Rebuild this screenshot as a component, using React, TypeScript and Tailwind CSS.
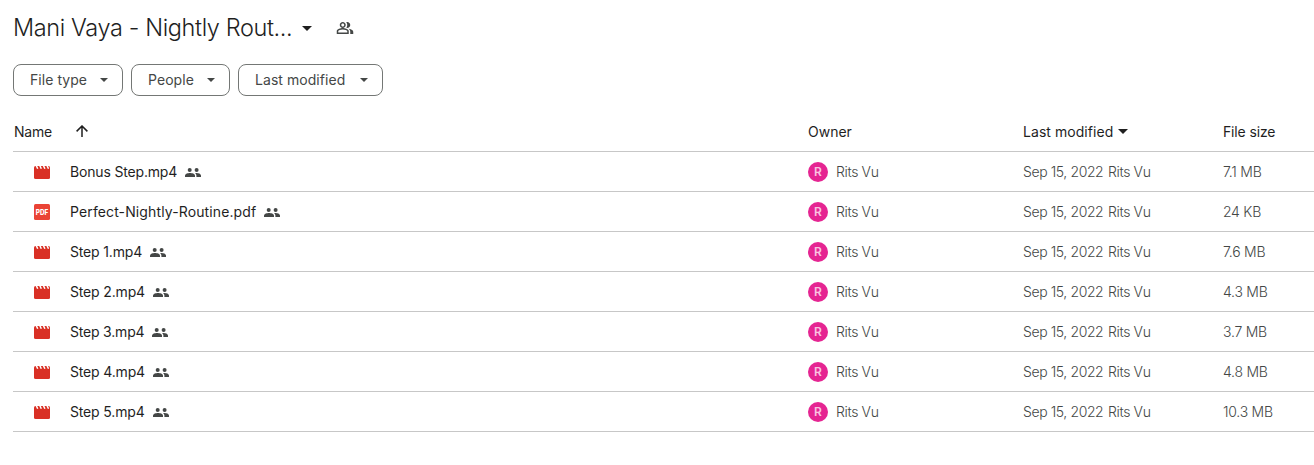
const FONT = 'font-[Inter,Roboto,sans-serif]';

interface DriveFile {
  name: string;
  kind: 'video' | 'pdf';
  size: string;
  nameClass: string;
}

const FILES: DriveFile[] = [
  { name: 'Bonus Step.mp4', kind: 'video', size: '7.1 MB', nameClass: 'w-[107px] tracking-[-0.17px]' },
  { name: 'Perfect-Nightly-Routine.pdf', kind: 'pdf', size: '24 KB', nameClass: 'w-[186px] tracking-[0.12px]' },
  { name: 'Step 1.mp4', kind: 'video', size: '7.6 MB', nameClass: 'w-[72px] tracking-[-0.16px]' },
  { name: 'Step 2.mp4', kind: 'video', size: '4.3 MB', nameClass: 'w-[75px] tracking-[-0.16px]' },
  { name: 'Step 3.mp4', kind: 'video', size: '3.7 MB', nameClass: 'w-[74px] tracking-[-0.2px]' },
  { name: 'Step 4.mp4', kind: 'video', size: '4.8 MB', nameClass: 'w-[75px] tracking-[-0.16px]' },
  { name: 'Step 5.mp4', kind: 'video', size: '10.3 MB', nameClass: 'w-[75px] tracking-[-0.16px]' },
];

const CHIPS = [
  { label: 'File type', width: 'w-[110px]' },
  { label: 'People', width: 'w-[99px]' },
  { label: 'Last modified', width: 'w-[145px]' },
];

const COLUMNS = 'grid grid-cols-[795px_215px_200px_1fr]';

function Caret({ className }: { className: string }) {
  return (
    <svg className={className} viewBox="0 0 10 5" fill="currentColor">
      <path d="M0 0l5 5 5-5z" />
    </svg>
  );
}

function SharedIcon() {
  return (
    <svg className="ml-2 h-[10px] w-4 shrink-0 text-[#444746]" viewBox="0 0 16 10" fill="currentColor">
      <circle cx="4.7" cy="2.9" r="2" />
      <circle cx="11.6" cy="2.9" r="2" />
      <path d="M0 10V8.6C0 6.7 3 6 5 6s5 .7 5 2.6V10z" />
      <path d="M11.4 10V8.6c0-1.1-.5-1.9-1.3-2.4.5-.1 1-.2 1.5-.2 1.8 0 4.4.7 4.4 2.6V10z" />
    </svg>
  );
}

function VideoIcon() {
  return (
    <svg className="mt-px h-[13px] w-4" viewBox="0 0 16 13">
      <rect width="16" height="13" rx="1.5" fill="#d93025" />
      <path
        d="M2.2 -.5l1.5 3.3M5.8 -.5l1.5 3.3M9.4 -.5l1.5 3.3M13 -.5l1.5 3.3"
        stroke="#fff"
        strokeWidth="1.5"
      />
    </svg>
  );
}

function PdfIcon() {
  return (
    <svg className="h-4 w-4 tracking-normal" viewBox="0 0 16 16">
      <rect width="16" height="16" rx="1.5" fill="#ea4335" />
      <text
        x="8"
        y="10.6"
        textAnchor="middle"
        fontSize="7"
        fontWeight="800"
        textLength="12.5"
        lengthAdjust="spacingAndGlyphs"
        fill="#fff"
      >
        PDF
      </text>
    </svg>
  );
}

function FileRow({ file }: { file: DriveFile }) {
  return (
    <div className={`${COLUMNS} h-10 items-center border-b border-[#c7c7c7] text-[#444746]`}>
      <div className="flex items-center">
        <div className="ml-[21px] flex w-9 items-center">
          {file.kind === 'video' ? <VideoIcon /> : <PdfIcon />}
        </div>
        <span className={`${file.nameClass} whitespace-nowrap text-[#1f1f1f]`}>{file.name}</span>
        <SharedIcon />
      </div>
      <div className="flex items-center gap-2">
        <span className="flex h-5 w-5 items-center justify-center rounded-full bg-[#e52592] text-[12px] font-semibold text-[#fbc4e2]">
          R
        </span>
        <span className="font-light tracking-[-0.35px]">Rits Vu</span>
      </div>
      <div className="flex font-light">
        <span className="w-[85px] whitespace-nowrap tracking-[-0.4px]">Sep 15, 2022</span>
        <span className="tracking-[-0.35px]">Rits Vu</span>
      </div>
      <span className="font-light tracking-[-0.25px]">{file.size}</span>
    </div>
  );
}

export default function App() {
  return (
    <div className={`${FONT} h-[465px] overflow-hidden bg-white pl-[13px] text-[14px] leading-5 text-[#1f1f1f]`}>
      {/* Folder title */}
      <div className="flex h-14 items-center">
        <h1 className="w-[280px] whitespace-nowrap text-[23.5px] font-light leading-8 tracking-[-0.38px]">
          Mani Vaya - Nightly Rout...
        </h1>
        <Caret className="ml-[9px] h-[5px] w-[10px]" />
        <svg className="ml-6 h-[18px] w-[18px] text-[#444746]" viewBox="0 0 24 24" fill="currentColor">
          <path d="M15 8c0-1.42-.5-2.73-1.33-3.76.42-.14.86-.24 1.33-.24 2.21 0 4 1.79 4 4s-1.79 4-4 4c-.43 0-.84-.09-1.23-.21-.03-.01-.06-.02-.1-.03A5.98 5.98 0 0 0 15 8zm1.66 5.13C18.03 14.06 19 15.32 19 17v3h4v-3c0-2.18-3.58-3.47-6.34-3.87zM9 6c-1.1 0-2 .9-2 2s.9 2 2 2 2-.9 2-2-.9-2-2-2m0-2c2.21 0 4 1.79 4 4s-1.79 4-4 4-4-1.79-4-4 1.79-4 4-4zm0 10c-2.7 0-5.8 1.29-6 2.01V18h12v-2c-.2-.71-3.3-2-6-2m0-2c2.67 0 8 1.34 8 4v4H1v-4c0-2.66 5.33-4 8-4z" />
        </svg>
      </div>

      {/* Filters */}
      <div className="mt-2 flex gap-2">
        {CHIPS.map((chip) => (
          <button
            key={chip.label}
            className={`${chip.width} flex h-8 items-center justify-between rounded-lg border border-[#747775] pl-4 pr-[14px] tracking-[0.05px] text-[#444746]`}
          >
            {chip.label}
            <Caret className="h-1 w-2" />
          </button>
        ))}
      </div>

      {/* Table header */}
      <div className={`${COLUMNS} mt-4 h-10 items-center border-b border-[#c7c7c7]`}>
        <div className="flex items-center pl-px">
          <span className="w-[62px] tracking-[-0.2px]">Name</span>
          <svg className="mb-px h-3 w-3" viewBox="0 0 12 12" fill="none" stroke="currentColor" strokeWidth="1.5">
            <path d="M6 12V1.2M.6 6.4L6 1l5.4 5.4" />
          </svg>
        </div>
        <span>Owner</span>
        <div className="flex items-center">
          <span className="w-[95px] whitespace-nowrap tracking-[0.05px]">Last modified</span>
          <Caret className="h-[5px] w-[10px]" />
        </div>
        <span className="tracking-[-0.15px]">File size</span>
      </div>

      {FILES.map((file) => (
        <FileRow key={file.name} file={file} />
      ))}
    </div>
  );
}
